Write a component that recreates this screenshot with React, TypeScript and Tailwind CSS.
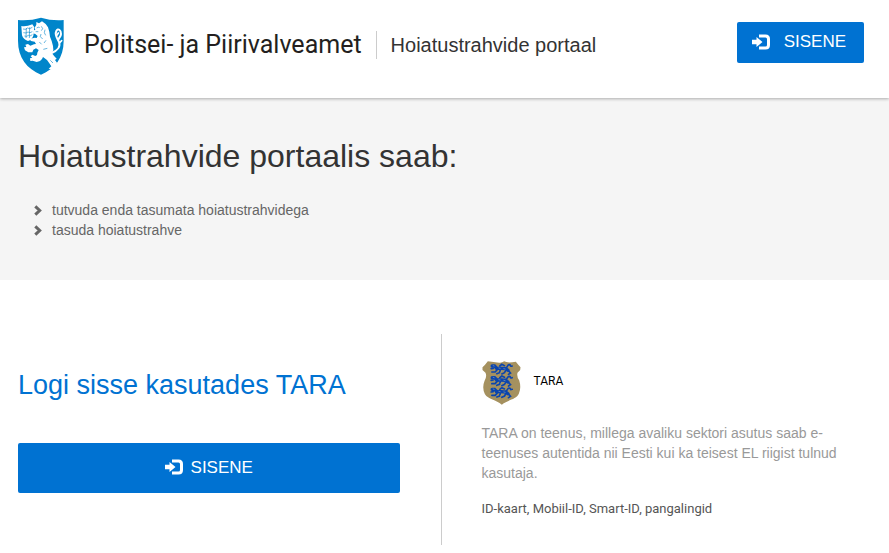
function PoliceCrest() {
  return (
    <svg viewBox="21 21 144 174" className="h-[58px] w-12 shrink-0" aria-label="Politsei- ja Piirivalveamet" role="img">
      <path d="M24 30Q60 33 93 23Q126 33 161 30V92C161 144 135 176 93 194C51 176 24 144 24 92Z" fill="#0085ca" />
      <path d="M34 48Q48 51 67 43L73 52L70 77Q66 89 54 93Q40 89 36 76Z" fill="#fff" />
      <path d="M39 57l8 1 5-4 7 2 8-4M40 68l8 1 6-3 6 2 7-3M43 78l7 1 5-3 5 2 7-4M49 54l-1 30M59 52l-1 32" fill="none" stroke="#0085ca" strokeWidth="1.800" />
      <path d="M74 53L79 44L79 36L87 40L96 34L107 42L114 52L118 65L120 80L125 93L129 108L130 120L126 130L133 139L140 146L135 150L141 158L139 168L131 176L124 178L116 176L124 169L118 160L111 150L99 141L96 147L90 153L80 156L68 152L61 153L60 145L67 143L62 139L67 134L76 138L81 135L82 128L86 120L78 115L70 119L67 127L55 127L45 121L42 112L49 111L46 104L54 102L61 107L72 103L78 102L74 95L63 93L58 87L74 83L80 84L83 78L75 71L70 71L70 61L76 60Z" fill="#fff" />
      <path d="M125 129C143 122 152 109 147 96C141 84 133 75 139 63C144 53 153 60 153 72C153 81 146 82 146 88" fill="none" stroke="#fff" strokeWidth="6" strokeLinecap="round" />
      <path d="M140 77l5-8M150 97l5-5" stroke="#fff" strokeWidth="5" strokeLinecap="round" />
      <path d="M80 54l6-3 3 3M94 49l4 7-4 6M105 59l-2 9 4 8M93 72l-2 8 7 7M108 91l-6 8M88 96l7 7M112 115l-12 3M77 65l8 0M121 151l8 8" fill="none" stroke="#0085ca" strokeWidth="1.800" />
    </svg>
  );
}

function Leopard({ y }: { y: number }) {
  return (
    <g transform={`translate(46 ${y})`} fill="none" stroke="#0b45ae" strokeLinecap="round">
      <path d="M5 4l7 0 7 7M18 11l14 0 14 1 6 5" strokeWidth="10" />
      <path d="M22 13l-8 9-10 0M30 14l-3 10-8 3M47 15l-5 9-8 4M53 17l7 8-6 4M8 11l-6 1M28 4l6-5 8 4M46 9c5 0 4-9 10-9 8 1 0 7 9 4" strokeWidth="5" />
      <path d="M8 3l3 1M25 10l4 1M40 12l4 1M31 22l3-3" stroke="#8c9fa8" strokeWidth="2" />
    </g>
  );
}

function TaraCrest() {
  return (
    <svg viewBox="21 33 116 132" className="h-11 w-[39px] shrink-0" aria-hidden="true">
      <path d="M38 34L72 38Q80 39 87 34Q97 40 122 35L130 45L136 52L135 60L127 68Q124 79 132 91Q139 113 131 131C124 148 98 149 80 164C63 149 39 149 29 132Q20 113 28 93Q36 79 31 68L22 60L22 52L29 45Z" fill="#a5915f" />
      <Leopard y={44} />
      <Leopard y={79} />
      <Leopard y={114} />
    </svg>
  );
}

function LoginIcon() {
  return (
    <svg viewBox="0 0 18 16" className="mb-0.5 h-4 w-[18px] shrink-0" aria-hidden="true">
      <path d="M7 2h6.500q3 0 3 3v6q0 3-3 3H7" fill="none" stroke="currentColor" strokeWidth="3" />
      <path d="M4.500 3L10.500 8L4.500 13V10.200H0V5.800H4.500Z" fill="currentColor" />
    </svg>
  );
}

function Chevron() {
  return (
    <svg viewBox="0 0 8 11" className="h-[11px] w-2 shrink-0" aria-hidden="true">
      <path d="M1.300 1.300L5.700 5.500L1.300 9.700" fill="none" stroke="#666" strokeWidth="3" />
    </svg>
  );
}

const items = ["tutvuda enda tasumata hoiatustrahvidega", "tasuda hoiatustrahve"];

export default function App() {
  return (
    <div className="min-h-screen bg-white font-['Liberation_Sans',Arial,sans-serif] text-sm text-[#666]">
      <header className="relative flex items-start justify-between bg-white pt-[17px] pr-[25px] pb-[23px] pl-[17px] shadow-[0_1px_3px_rgba(0,0,0,0.3)]">
        <div className="flex items-center">
          <PoliceCrest />
          <div className="ml-[19px] flex items-center gap-3.5 pb-0.5 leading-7 whitespace-nowrap">
            <span className="font-['Roboto',sans-serif] text-[25px] leading-7 text-[#231f20]">
              Politsei- ja Piirivalveamet
            </span>
            <span className="border-l border-[#ccc] pl-3.5 text-xl leading-7 text-[#333]">
              Hoiatustrahvide portaal
            </span>
          </div>
        </div>
        <button type="button" className="mt-[5px] flex h-[41px] shrink-0 items-center gap-3.5 rounded-xs bg-[#0072d2] pr-[18px] pl-[15px] text-[17px] text-white">
          <LoginIcon />
          SISENE
        </button>
      </header>

      <section className="bg-[#f5f5f5] px-[18px] pt-[38px] pb-10">
        <h1 className="text-[32px] leading-10 text-[#333]">Hoiatustrahvide portaalis saab:</h1>
        <ul className="mt-6 pl-4">
          {items.map((item) => (
            <li key={item} className="flex items-center gap-2.5 leading-5">
              <Chevron />
              {item}
            </li>
          ))}
        </ul>
      </section>

      <main className="mt-[54px] grid grid-cols-2 pb-2">
        <section className="pt-[31px] pr-[45px] pl-[18px]">
          <h2 className="text-[27px] leading-10 text-[#0072d2]">Logi sisse kasutades TARA</h2>
          <button type="button" className="mt-[38px] flex h-[50px] w-full items-center justify-center gap-2 rounded-xs bg-[#0072d2] text-[17px] text-white">
            <LoginIcon />
            SISENE
          </button>
        </section>
        <section className="-ml-1 border-l border-[#ccc] pt-[27px] pr-8 pb-[26px] pl-10">
          <div className="flex items-center gap-[13px]">
            <TaraCrest />
            <span className="pb-1 font-['Roboto',sans-serif] text-xs text-black">TARA</span>
          </div>
          <p className="mt-[18px] leading-5 text-[#999]">
            TARA on teenus, millega avaliku sektori asutus saab e-teenuses autentida nii Eesti kui ka teisest EL riigist tulnud kasutaja.
          </p>
          <p className="mt-4 font-['Roboto',sans-serif] text-[13px] leading-5 text-[#555]">
            ID-kaart, Mobiil-ID, Smart-ID, pangalingid
          </p>
        </section>
      </main>
    </div>
  );
}
